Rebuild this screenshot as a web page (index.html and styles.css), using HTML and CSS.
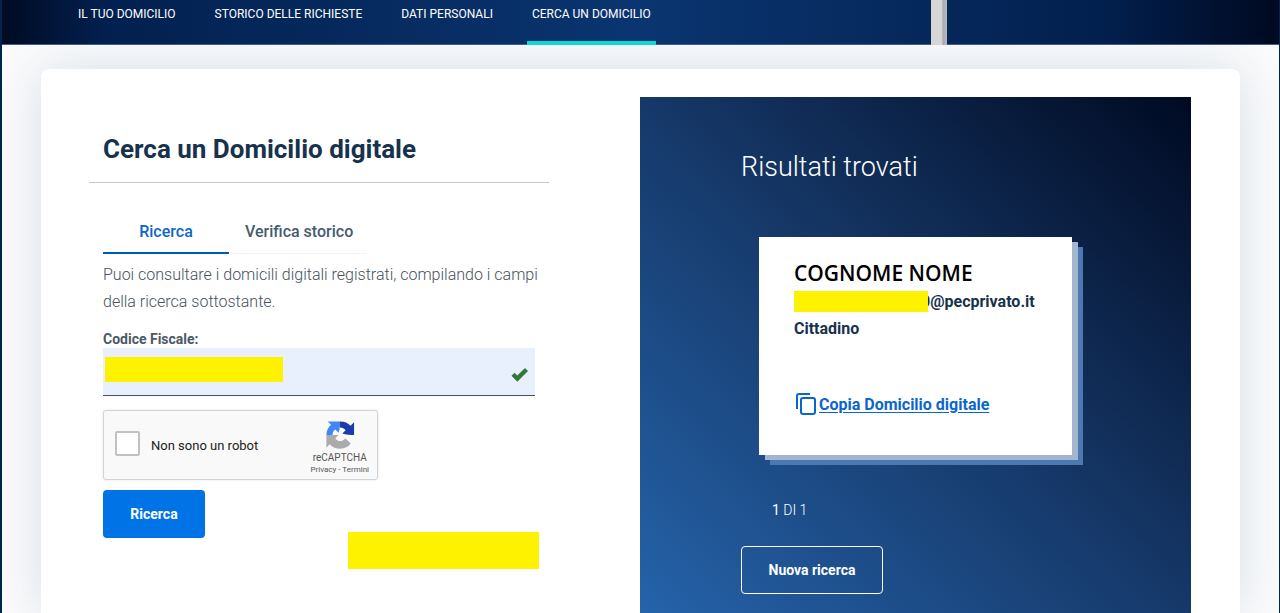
FILE: index.html
```html
<!DOCTYPE html>
<html lang="it">
<head>
  <meta charset="UTF-8">
  <meta name="viewport" content="width=device-width, initial-scale=1.0">
  <title>Cerca un Domicilio digitale</title>
  <link rel="stylesheet" href="styles.css">
</head>

<body>
  <header class="header">
    <nav class="nav">
      <a href="#">IL TUO DOMICILIO</a>
      <a href="#">STORICO DELLE RICHIESTE</a>
      <a href="#">DATI PERSONALI</a>
      <a href="#" class="active">CERCA UN DOMICILIO</a>
    </nav>
    <div class="stripe"></div>
  </header>

  <main class="page">
    <div class="card">
      <section class="search">
        <h1>Cerca un Domicilio digitale</h1>

        <form class="search-form">
          <div class="tabs">
            <button type="button" class="tab selected">Ricerca</button>
            <button type="button" class="tab">Verifica storico</button>
          </div>

          <p class="intro">Puoi consultare i domicili digitali registrati, compilando i campi
            della ricerca sottostante.</p>

          <label class="field-label" for="cf">Codice Fiscale:</label>
          <div class="field">
            <input type="text" id="cf">
            <span class="redacted field-redacted"></span>
            <svg class="check" viewBox="0 0 18 16" width="18" height="16">
              <path d="M0.5 8.8 3.5 5.8 6.3 8.6 14 1 17 4 6.3 14.8Z" fill="#36783c"/>
            </svg>
          </div>

          <!-- captcha box -->
          <div class="captcha">
            <input type="checkbox" id="robot">
            <label for="robot">Non sono un robot</label>
            <div class="captcha-brand">
              <svg viewBox="0 0 64 64" width="30" height="30">
                <path d="M62 32V5l-7.500 7.500A29 29 0 0 0 32 3v13c5 0 9 2 12 6l-7 7c8 3 17 3 25 3z" fill="#1c3aa9"/>
                <path d="M32 3H6l7 7A29 29 0 0 0 3 32h13c0-6 2-9 6-12l7 7c3-8 3-16 3-24z" fill="#4285f4"/>
                <path d="M3 32v27l7-7.500A29 29 0 0 0 55 50l-12-11c-2 4-6 6-11 6-4 0-8-2-10-6l7-7z" fill="#ababab"/>
              </svg>
              <span class="brand-name">reCAPTCHA</span>
              <span class="brand-links"><a href="#">Privacy</a> - <a href="#">Termini</a></span>
            </div>
          </div>

          <div class="actions">
            <button type="submit" class="submit-button">Ricerca</button>
            <span class="redacted actions-redacted"></span>
          </div>
        </form>
      </section>

      <section class="results">
        <h2>Risultati trovati</h2>

        <article class="result">
          <h3>COGNOME NOME</h3>
          <p class="address"><span class="redacted address-redacted"></span><span>0@pecprivato.it</span></p>
          <p class="kind">Cittadino</p>
          <a href="#" class="copy">
            <svg viewBox="0 0 20 22" width="20" height="22" fill="none" stroke="#0b66cc" stroke-width="2">
              <path d="M1 16V3a2 2 0 0 1 2-2h11"/>
              <rect x="5" y="5" width="14" height="16" rx="2"/>
            </svg>
            <span>Copia Domicilio digitale</span>
          </a>
        </article>

        <p class="counter"><strong>1</strong> DI 1</p>
        <button type="button" class="new-search">Nuova ricerca</button>
      </section>
    </div>
  </main>
</body>
</html>
```
FILE: styles.css
```css
* {
  box-sizing: border-box;
  margin: 0;
  padding: 0;
}

body {
  font-family: Roboto, "Liberation Sans", sans-serif;
  background: #fafbfc;
  border: solid #00264d;
  border-width: 0 1px 0 2px;
  color: #17324d;
  display: flex;
  flex-direction: column;
  min-height: 100vh;
}

button, input {
  font-family: inherit;
}

.header {
  background: linear-gradient(90deg, #000b23 0, #02204f 8%, #0a3570 50%, #02204f 86%, #000b23 99%);
  border-bottom: 1px solid #405d85;
  height: 45px;
  padding-left: 71px;
  position: relative;
}

.nav {
  display: flex;
  gap: 29px;
}

.nav a {
  color: white;
  font-size: 12px;
  height: 45px;
  line-height: 28px;
  padding: 0 5px;
  text-decoration: none;
  white-space: nowrap;
}

.nav .active {
  border-bottom: 4px solid #0bd9d2;
}

.stripe {
  background: linear-gradient(90deg, #d6d6d6 0 65%, #a8acb0 75%, #b5babd);
  height: 45px;
  width: 16px;
  position: absolute;
  top: 0;
  right: 332px;
}

.page {
  display: flex;
  flex: 1;
  overflow: hidden;
  padding: 24px 39px 0;
}

.card {
  background: white;
  border-radius: 8px 8px 0 0;
  box-shadow: 0 0 50px rgba(0, 50, 100, 0.14);
  display: grid;
  grid-template-columns: 460px 551px;
  justify-content: space-between;
  padding: 28px 49px 0 48px;
  width: 100%;
}

h1 {
  border-bottom: 1px solid #c3c7cb;
  font-size: 26px;
  line-height: 36px;
  padding: 34px 14px 15px;
}

.search-form {
  padding: 30px 14px 0;
}

.tabs {
  display: flex;
  gap: 2px;
}

.tab {
  background: none;
  border: none;
  border-bottom: 1px solid #f2f3f5;
  color: #455a70;
  font-size: 16px;
  font-weight: 500;
  height: 41px;
  padding: 0 14px 3px;
}

.tab.selected {
  border-bottom: 2px solid #0059b3;
  color: #0b66cc;
  width: 126px;
}

.intro {
  color: #455260;
  font-size: 16px;
  font-weight: 300;
  line-height: 27px;
  margin-right: -10px;
  padding-top: 7px;
}

.field-label {
  color: #4c5967;
  display: block;
  font-size: 14px;
  font-weight: bold;
  line-height: 18px;
  margin-top: 15px;
}

.field {
  position: relative;
}

.field input {
  background: #e8f0fe;
  border: none;
  border-bottom: 1px solid #435060;
  display: block;
  font-size: 16px;
  height: 48px;
  width: 100%;
}

.redacted {
  background: #fff200;
  display: block;
}

.field-redacted {
  height: 25px;
  width: 178px;
  position: absolute;
  left: 2px;
  top: 9px;
}

.check {
  position: absolute;
  right: 6px;
  top: 19px;
}

.captcha {
  align-items: center;
  background: #f9f9f9;
  border: 1px solid #d3d3d3;
  border-radius: 3px;
  box-shadow: 0 0 3px rgba(0, 0, 0, 0.1);
  color: #222;
  display: flex;
  font-size: 13px;
  height: 70px;
  margin-top: 14px;
  padding: 0 8px 0 11px;
  width: 275px;
}

.captcha input {
  appearance: none;
  background: white;
  border: 2px solid #c1c1c1;
  border-radius: 2px;
  height: 25px;
  margin: 0 11px 4px 0;
  width: 25px;
}

.captcha-brand {
  align-items: center;
  color: #555;
  display: flex;
  flex-direction: column;
  margin-left: auto;
  padding-top: 4px;
}

.brand-name {
  font-size: 10px;
  line-height: 16px;
}

.brand-links {
  font-size: 8px;
  line-height: 8px;
}

.brand-links a {
  color: inherit;
  text-decoration: none;
}

.actions {
  display: flex;
  height: 79px;
  justify-content: space-between;
  margin-top: 10px;
}

.submit-button {
  background: #0073e6;
  border: none;
  border-radius: 4px;
  color: white;
  font-size: 14px;
  font-weight: bold;
  height: 48px;
  width: 102px;
}

.actions-redacted {
  align-self: flex-end;
  height: 37px;
  margin-right: -4px;
  width: 191px;
}

.results {
  background: linear-gradient(to top right, #2563aa, #143462 55%, #000a22);
  color: white;
  padding: 50px 101px 19px;
}

h2 {
  font-size: 27px;
  font-weight: 300;
  line-height: 40px;
}

.result {
  background: white;
  box-shadow: 6px 5px #a2b6d0, 11px 10px #4e79b0;
  color: #17324d;
  height: 218px;
  margin: 50px 0 0 18px;
  padding: 22px 35px;
  width: 313px;
}

h3 {
  color: black;
  font-family: "Open Sans", sans-serif;
  font-size: 21px;
  font-weight: 600;
  line-height: 28px;
}

.address {
  align-items: center;
  display: flex;
  font-size: 16px;
  font-weight: bold;
  height: 28px;
}

/* covers the start of the address */
.address-redacted {
  height: 21px;
  margin-right: -7px;
  position: relative;
  width: 134px;
}

.kind {
  font-size: 16px;
  font-weight: bold;
  line-height: 28px;
}

.copy {
  align-items: center;
  color: #0b66cc;
  display: flex;
  font-size: 16px;
  font-weight: bold;
  gap: 3px;
  margin: 50px 0 0 2px;
  text-decoration: none;
}

.copy span {
  text-decoration: underline;
  text-decoration-thickness: 1px;
  text-underline-offset: 2px;
  white-space: nowrap;
}

.counter {
  font-size: 14px;
  font-weight: 300;
  line-height: 20px;
  margin: 45px 0 0 31px;
}

.new-search {
  background: none;
  border: 1px solid white;
  border-radius: 4px;
  color: white;
  font-size: 14px;
  font-weight: bold;
  height: 48px;
  margin-top: 26px;
  width: 142px;
}
```
